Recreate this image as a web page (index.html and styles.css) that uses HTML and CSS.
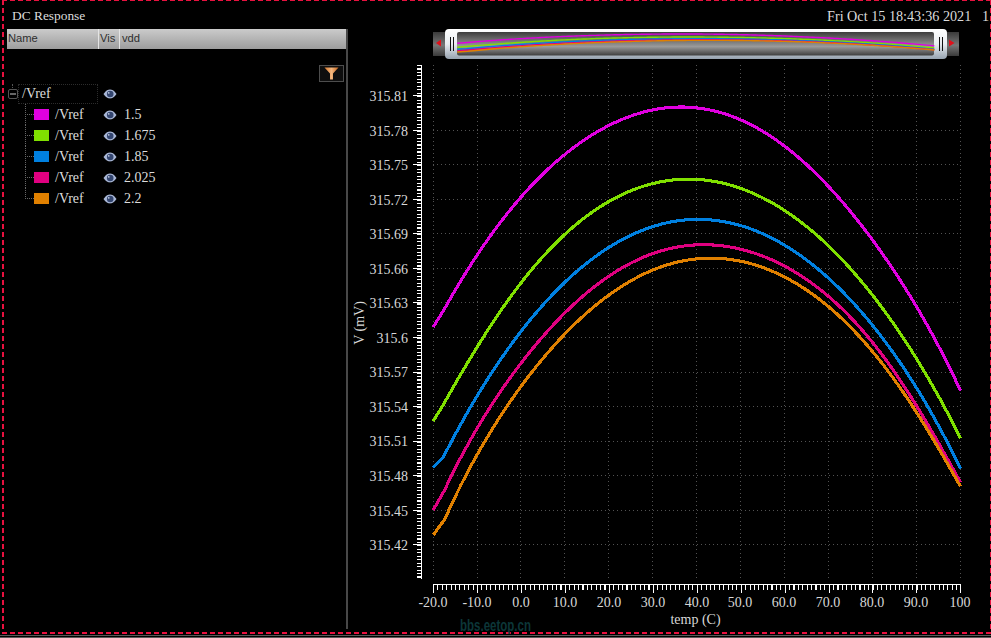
FILE: index.html
```html
<!DOCTYPE html>
<html lang="en">
<head>
<meta charset="utf-8">
<title>DC Response</title>
<link rel="stylesheet" href="styles.css">
</head>
<body>
<svg class="defs" width="0" height="0" aria-hidden="true">
  <symbol id="eye" viewBox="0 0 14 10">
    <path class="eye-lens" d="M0.5 5C3 1.4 5 .6 7 .6S11 1.4 13.5 5C11 8.6 9 9.4 7 9.4S3 8.6 .5 5Z"/>
    <circle class="eye-iris" cx="7.2" cy="5" r="3.3"/>
    <circle class="eye-glint" cx="5.8" cy="3.9" r=".8"/>
  </symbol>
</svg>
<div class="frame">
  <header class="titlebar">
    <span>DC Response</span>
    <span class="date">Fri Oct 15 18:43:36 2021&nbsp;&nbsp;&nbsp;1</span>
  </header>
  <main class="body">
    <section class="panel">
      <div class="thead">
        <div class="th th-name">Name</div>
        <div class="th th-vis">Vis</div>
        <div class="th th-vdd">vdd</div>
      </div>
      <div class="toolbar">
        <button class="filter" type="button" aria-label="Filter">
          <svg width="15" height="13" viewBox="0 0 15 13">
            <defs><linearGradient id="fun" x1="0" y1="0" x2="1" y2="0"><stop offset="0" stop-color="#d9792e"/><stop offset=".5" stop-color="#f2b67e"/><stop offset="1" stop-color="#c9651c"/></linearGradient></defs>
            <path fill="url(#fun)" d="M.5 .5H14.5L9 6.5V12.5H6V6.5Z"/>
          </svg>
        </button>
      </div>
      <div class="tree">
        <div class="row root">
          <span class="expander"></span>
          <span class="root-name">/Vref</span>
          <svg class="eye"><use href="#eye"/></svg>
        </div>
        <div class="row child"><span class="stub"></span><span class="swatch c1"></span><span class="name">/Vref</span><svg class="eye"><use href="#eye"/></svg><span class="val">1.5</span></div>
        <div class="row child"><span class="stub"></span><span class="swatch c2"></span><span class="name">/Vref</span><svg class="eye"><use href="#eye"/></svg><span class="val">1.675</span></div>
        <div class="row child"><span class="stub"></span><span class="swatch c3"></span><span class="name">/Vref</span><svg class="eye"><use href="#eye"/></svg><span class="val">1.85</span></div>
        <div class="row child"><span class="stub"></span><span class="swatch c4"></span><span class="name">/Vref</span><svg class="eye"><use href="#eye"/></svg><span class="val">2.025</span></div>
        <div class="row child last"><span class="stub"></span><span class="swatch c5"></span><span class="name">/Vref</span><svg class="eye"><use href="#eye"/></svg><span class="val">2.2</span></div>
      </div>
    </section>
    <svg class="chart" viewBox="348 29 642 600" width="642" height="600">
      <defs>
        <linearGradient id="win" x1="0" y1="0" x2="0" y2="1">
          <stop offset="0" stop-color="#3c3c3c"/><stop offset=".62" stop-color="#9a9a9a"/><stop offset="1" stop-color="#3e3e3e"/>
        </linearGradient>
        <linearGradient id="btn" x1="0" y1="0" x2="0" y2="1">
          <stop offset="0" stop-color="#3a3a3a"/><stop offset=".55" stop-color="#777"/><stop offset="1" stop-color="#3a3a3a"/>
        </linearGradient>
        <linearGradient id="hand" x1="0" y1="0" x2="0" y2="1">
          <stop offset="0" stop-color="#ffffff"/><stop offset=".5" stop-color="#e8ecf0"/><stop offset="1" stop-color="#97a3b0"/>
        </linearGradient>
        <g id="curves">
          <polyline class="curve k1" points="433.3,327 445,308 458,285.5 472,263.5 485,243.5 498,224.5 512,207.5 525,193 538,179.5 558,160.5 572,149 592,134.5 608,125.5 625,118 642,112.5 658,109 678,107 695,108 712,110.5 728,115 745,122 762,131 778,141.5 795,154.5 812,169 828,185.5 845,205 862,226 878,248.5 895,272.5 912,299 928,326.5 947,362 960,390"/>
          <polyline class="curve k2" points="433.3,421 443.5,405 458,378.5 475,349 492,324.5 512,295.5 525,278.5 542,258.5 558,240.5 575,224.5 592,211 608,201.5 625,193.5 642,187.5 658,183 678,180 695,179.5 712,181 728,184 745,189.5 762,197 778,206.5 795,218 812,231 828,245.5 845,262.5 862,282.5 878,303 895,325 910,348.5 927,375.5 943,405 960,437"/>
          <polyline class="curve k3" points="433.3,467.5 443.5,457 458,428.5 475,400 492,373 508,348.5 525,326.5 548,299 568,278.5 588,262 608,248.5 625,239 642,231 658,225 678,220.5 695,219 712,219.5 728,222.5 745,227 762,233 778,241.5 795,252 812,264.5 828,278.5 846,295.5 863,314 880,334 897,357 913,382.5 930,411 943,435 960,467"/>
          <polyline class="curve k4" points="433.3,510 445,488.5 458,463.5 475,433 492,405 508,379.5 525,357 542,337 558,320 575,304 592,289 608,277 625,267 642,258.5 658,251.5 678,246 695,244 712,244.5 728,246.5 745,250.5 762,256 778,263.5 795,272.5 812,283.5 828,296.5 847,313.5 867,335 883,355 900,380 917,407 933,434.5 947,458 960,481"/>
          <polyline class="curve k5" points="433.3,535 445,518 458,491.5 475,460 492,430 508,403.5 525,380 542,358.5 558,341 575,325 592,310 608,296.5 625,284 642,274.5 658,267.5 678,261 695,259 712,258 728,259 745,262.5 762,267.5 778,274.5 795,283 812,293.5 830,308 850,326.5 870,348.5 890,373.5 907,397 923,423 940,452 960,485"/>
        </g>
      </defs>

      <!-- overview slider -->
      <rect x="433" y="32" width="14" height="24" fill="url(#btn)"/>
      <rect x="945" y="32" width="14" height="24" fill="url(#btn)"/>
      <path class="arrow" d="M441 39.5V46.5L436 43Z"/>
      <path class="arrow" d="M949 39.5V46.5L954.5 43Z"/>
      <rect x="445" y="29" width="502" height="30" rx="4" fill="url(#hand)"/>
      <rect x="457" y="32" width="477" height="23.5" rx="2" fill="url(#win)"/>
      <use href="#curves" class="mini" transform="matrix(.905 0 0 .042 65.1 29.5)"/>
      <path class="grip" d="M450.5 37V51M453 37V51M939.5 37V51M942 37V51"/>

      <!-- grid -->
      <path class="grid" d="M433 65V579M477 65V579M520.9 65V579M564.8 65V579M608.7 65V579M652.7 65V579M696.6 65V579M740.5 65V579M784.5 65V579M828.4 65V579M872.3 65V579M916.2 65V579M960.5 65V579"/>
      <path class="grid" d="M433 95.5H961M433 130H961M433 164.6H961M433 199.2H961M433 233.7H961M433 268.3H961M433 302.9H961M433 337.4H961M433 372H961M433 406.5H961M433 441.1H961M433 475.7H961M433 510.2H961M433 544.8H961"/>

      <!-- curves -->
      <use href="#curves" class="main-curves"/>

      <!-- y axis -->
      <path class="axis" d="M421.5 65V578.5"/>
      <line class="minor-y" x1="419" x2="419" y1="65" y2="579"/>
      <path class="axis" d="M413 95.5H421M413 130H421M413 164.6H421M413 199.2H421M413 233.7H421M413 268.3H421M413 302.9H421M413 337.4H421M413 372H421M413 406.5H421M413 441.1H421M413 475.7H421M413 510.2H421M413 544.8H421"/>
      <g class="ylabels">
        <text x="408" y="101">315.81</text><text x="408" y="136">315.78</text><text x="408" y="170">315.75</text><text x="408" y="205">315.72</text><text x="408" y="239">315.69</text><text x="408" y="274">315.66</text><text x="408" y="308">315.63</text><text x="408" y="343">315.6</text><text x="408" y="377">315.57</text><text x="408" y="412">315.54</text><text x="408" y="446">315.51</text><text x="408" y="481">315.48</text><text x="408" y="516">315.45</text><text x="408" y="550">315.42</text>
      </g>
      <text class="axis-title" transform="translate(363.5 323) rotate(-90)">V (mV)</text>

      <!-- x axis -->
      <path class="axis" d="M433 584.5H961"/>
      <line class="minor-x" x1="433" x2="961" y1="587" y2="587"/>
      <path class="axis" d="M433.5 584V592.5M477 584V592.5M521 584V592.5M565 584V592.5M609 584V592.5M653 584V592.5M697 584V592.5M741 584V592.5M785 584V592.5M829 584V592.5M872.5 584V592.5M916.5 584V592.5M960.5 584V592.5"/>
      <g class="xlabels">
        <text x="433" y="607">-20.0</text><text x="477" y="607">-10.0</text><text x="521" y="607">0.0</text><text x="565" y="607">10.0</text><text x="609" y="607">20.0</text><text x="653" y="607">30.0</text><text x="697" y="607">40.0</text><text x="740" y="607">50.0</text><text x="784" y="607">60.0</text><text x="828" y="607">70.0</text><text x="872" y="607">80.0</text><text x="916" y="607">90.0</text><text x="960" y="607">100</text>
      </g>
      <text class="x-title" x="695.5" y="624">temp (C)</text>
      <text class="mark" x="460" y="631" textLength="71" lengthAdjust="spacingAndGlyphs">bbs.eetop.cn</text>
    </svg>
  </main>
</div>
<div class="rule"></div>
<script src="page.js"></script>
</body>
</html>
```
FILE: styles.css
```css
html, body { margin: 0; padding: 0; background: #000; overflow: hidden; }
body { width: 991px; height: 638px; font-family: "Liberation Serif", serif; color: #dcdcdc; font-size: 14px; }
.defs { display: block; height: 0; }

.frame {
  box-sizing: border-box;
  width: 989px;
  height: 634px;
  margin-left: 2px;
  padding: 1px 1px 2px 2px;
  background:
    repeating-linear-gradient(90deg, #e8113f 0 5px, transparent 5px 8px) left top / 100% 1px no-repeat,
    repeating-linear-gradient(90deg, #e8113f 0 5px, transparent 5px 8px) left bottom / 100% 2px no-repeat,
    repeating-linear-gradient(180deg, #e8113f 0 5px, transparent 5px 8px) left top / 2px 100% no-repeat,
    repeating-linear-gradient(180deg, #e8113f 0 5px, transparent 5px 8px) right top / 1px 100% no-repeat;
}
.rule { height: 1px; margin-top: 1px; border-top: 1px solid #5a5a5a; border-bottom: 1px solid #5a5a5a; }

.titlebar { height: 28px; display: flex; justify-content: space-between; align-items: center; padding: 2px 1px 0 8px; box-sizing: border-box; white-space: pre; overflow: hidden; }
.titlebar span:first-child { font-size: 13.4px; }
.date { font-size: 14.2px; }

.body { display: flex; height: 600px; }

.panel { box-sizing: border-box; width: 341px; margin-left: 3px; flex: none; border-right: 2px solid #484848; }
.thead { height: 20px; display: flex; background: linear-gradient(#cbcbcb, #9d9d9d); font: 11.2px/18px "Liberation Sans", sans-serif; color: #2e2e2e; }
.th { box-sizing: border-box; padding-left: 1px; }
.th-name { width: 91px; }
.th-vis { width: 21px; border-left: 1px solid #e4e4e4; padding-left: 1px; }
.th-vdd { flex: 1; border-left: 1px solid #e4e4e4; padding-left: 2px; }

.toolbar { height: 34px; box-sizing: border-box; padding: 16px 2px 0 0; display: flex; justify-content: flex-end; }
.filter { box-sizing: border-box; width: 25px; height: 17px; padding: 0; background: #0e0e0e; border: 1px solid #4d4d4d; display: flex; align-items: center; justify-content: center; }

.row { height: 21px; display: flex; align-items: center; position: relative; }
.eye { width: 14px; height: 10px; flex: none; }
.eye-lens { fill: #a9b7d6; }
.eye-iris { fill: #33456f; }
.eye-glint { fill: #cfd8ea; }

.expander { box-sizing: border-box; width: 10px; height: 10px; margin-left: 1px; border: 1px solid #555; border-radius: 2px; background: linear-gradient(#666, #666) center / 6px 2px no-repeat; position: relative; }
.expander::before { content: ""; position: absolute; left: 3px; top: -6px; height: 4px; border-left: 1px dotted #555; }
.root-name { box-sizing: border-box; width: 80px; height: 20px; margin: 0 5px 0 0; padding-left: 4px; line-height: 20px; outline: 1px dotted #2c2c2c; outline-offset: -1px; }

.child { padding-left: 18px; }
.child::before { content: ""; position: absolute; left: 18px; top: 0; bottom: 0; border-left: 1px dotted #666; }
.child.last::before { bottom: 50%; }
.stub { width: 9px; border-top: 1px dotted #666; flex: none; }
.swatch { width: 15px; height: 11px; flex: none; }
.c1 { background: #e000e0; }
.c2 { background: #80e000; }
.c3 { background: #0080e0; }
.c4 { background: #e00080; }
.c5 { background: #e08000; }
.name { margin-left: 6px; width: 48px; flex: none; }
.val { margin-left: 7px; }

.chart { display: block; flex: none; overflow: visible; }
.chart text { font-family: "Liberation Serif", serif; font-size: 14px; fill: #d8d8d8; }
.grid { fill: none; stroke: #525252; stroke-width: 1; stroke-dasharray: 1 3; shape-rendering: crispEdges; }
.main-curves { --sw: 3.1; --sr: crispEdges; }
.mini { --sw: 1.4; --sr: auto; }
.curve { fill: none; stroke-width: var(--sw); shape-rendering: var(--sr); vector-effect: non-scaling-stroke; stroke-linejoin: round; }
.k1 { stroke: #e000e0; }
.k2 { stroke: #80e000; }
.k3 { stroke: #0080e0; }
.k4 { stroke: #e00080; }
.k5 { stroke: #e08000; }
.axis { fill: none; stroke: #fff; stroke-width: 1; shape-rendering: crispEdges; }
.minor-y { stroke: #fff; stroke-width: 5; stroke-dasharray: 1.1 2.356; shape-rendering: crispEdges; }
.minor-x { stroke: #fff; stroke-width: 5; stroke-dasharray: 1.1 3.296; shape-rendering: crispEdges; }
.ylabels text { text-anchor: end; }
.xlabels text, .axis-title, .x-title { text-anchor: middle; }
.arrow { fill: #e0101a; }
.grip { fill: none; stroke: #111; stroke-width: 1; shape-rendering: crispEdges; }
.chart .mark { font-family: "Liberation Sans", sans-serif; font-weight: 700; font-size: 16px; fill: #0c3638; }
```
FILE: page.js
```js
// The traces are hand-read samples; fit each with a low-order polynomial so that they plot smoothly.
// The first segment stays straight: the simulator's first step shows as a kink.
var DEGREE = 7;

function fit(points) {
  var x0 = 697, w = 265, n = DEGREE + 1, A = [], i, j, k;
  for (i = 0; i < n; i++) { A.push(new Array(n + 1).fill(0)); }
  points.forEach(function (q) {
    var u = (q[0] - x0) / w, pw = [1];
    for (i = 1; i < n; i++) { pw.push(pw[i - 1] * u); }
    for (i = 0; i < n; i++) {
      for (j = 0; j < n; j++) { A[i][j] += pw[i] * pw[j]; }
      A[i][n] += pw[i] * q[1];
    }
  });
  for (i = 0; i < n; i++) {
    var best = i;
    for (k = i + 1; k < n; k++) { if (Math.abs(A[k][i]) > Math.abs(A[best][i])) { best = k; } }
    var tmp = A[i]; A[i] = A[best]; A[best] = tmp;
    for (k = 0; k < n; k++) {
      if (k !== i) {
        var f = A[k][i] / A[i][i];
        for (j = i; j <= n; j++) { A[k][j] -= f * A[i][j]; }
      }
    }
  }
  var c = A.map(function (row, r) { return row[n] / row[r]; });
  return function (x) {
    var u = (x - x0) / w, y = 0;
    for (var m = n - 1; m >= 0; m--) { y = y * u + c[m]; }
    return y;
  };
}

document.querySelectorAll("polyline.curve").forEach(function (el) {
  var p = Array.from(el.points, function (q) { return [q.x, q.y]; });
  var f = fit(p.slice(1));
  var out = [p[0]];
  for (var x = p[1][0]; x < 960; x += 3) { out.push([x, f(x)]); }
  out.push([960.5, f(960.5)]);
  el.setAttribute("points", out.map(function (q) { return q[0].toFixed(2) + "," + q[1].toFixed(2); }).join(" "));
});
```
